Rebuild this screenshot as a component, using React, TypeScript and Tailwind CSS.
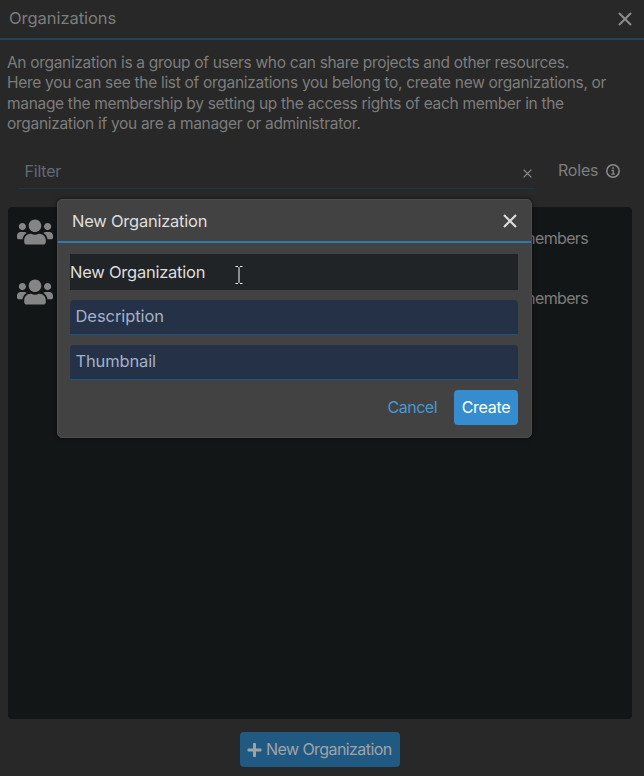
import type { ReactNode } from "react";
import { FaPlus, FaUsers } from "react-icons/fa";

function Cross({ className }: { className: string }) {
  return (
    <svg viewBox="0 0 14 14" className={className} fill="none" stroke="currentColor" strokeWidth="2.1">
      <path d="M1 1 L13 13 M13 1 L1 13" />
    </svg>
  );
}

function InfoIcon() {
  return (
    <svg viewBox="0 0 14 14" className="h-[14px] w-[14px]" fill="none" stroke="#8b8b8b">
      <circle cx="7" cy="7" r="6.2" strokeWidth="1.5" />
      <path d="M5.5 6.3 H7.2 V10 M5.4 10.2 H8.8" strokeWidth="1.3" />
      <path d="M6.2 4 H7.9" strokeWidth="1.6" />
    </svg>
  );
}

function MemberRow() {
  return (
    <li className="flex h-[60.5px] items-start justify-between pr-[44px] pl-[9px]">
      <FaUsers className="mt-[6.5px] h-[36px] w-[36px] text-[#858585]" />
      <span className="mt-[20.5px] text-[16px] leading-[20px] tracking-[-0.65px]">2 members</span>
    </li>
  );
}

function Field({ children }: { children: ReactNode }) {
  return (
    <div className="flex h-[35px] items-center rounded-t-[4px] border-b border-[#1d5580] bg-[#243147] pb-[2px] pl-[5.5px] text-[16.5px] text-[#a3b2c7]">
      {children}
    </div>
  );
}

function Modal() {
  return (
    <section className="absolute top-[199px] left-[57px] h-[239px] w-[475px] rounded-[5px] border border-[#4a4e51] bg-[#424242] text-[#dedede] shadow-[0_0_4px_rgba(0,0,0,0.6)]">
      <header className="flex h-[43px] items-center justify-between border-b-2 border-[#3079ad] pr-[14px] pl-[14px]">
        <h2 className="pt-px text-[16.5px] tracking-[-0.24px]">New Organization</h2>
        <Cross className="h-[14px] w-[14px]" />
      </header>
      <div className="flex flex-col gap-[10px] pt-[11px] pr-[13px] pl-[12px]">
        <div className="flex h-[36px] items-center bg-[#202426] text-[16.5px] tracking-[-0.24px]">New Organization</div>
        <Field><span className="tracking-[-0.07px]">Description</span></Field>
        <Field><span className="tracking-[-0.15px]">Thumbnail</span></Field>
        <div className="flex h-[35px] items-center justify-end gap-[17px]">
          <button className="tracking-[-0.5px] text-[#439bd6]">Cancel</button>
          <button className="h-[35px] w-[64px] rounded-[4px] bg-[#358dd0] tracking-[-0.3px] text-white">Create</button>
        </div>
      </div>
      <svg viewBox="0 0 8 18" className="absolute top-[66px] left-[177px] h-[18px] w-[8px]" fill="none" stroke="#f4f4f4">
        <path d="M0.5 0.5 H3 M5 0.5 H7.5 M4 1 V17 M0.5 17.5 H3 M5 17.5 H7.5" />
      </svg>
    </section>
  );
}

export default function App() {
  return (
    <main className="relative flex h-[776px] w-[644px] flex-col overflow-hidden bg-[#282828] font-['Inter',sans-serif] text-[16px] leading-[20.5px] text-[#7d7d7d]">
      <header className="flex h-[40px] shrink-0 items-center justify-between border-b-2 border-[#24435c] pr-[12px] pb-px pl-[9px]">
        <h1 className="text-[16.5px] tracking-[-0.05px]">Organizations</h1>
        <Cross className="h-[14px] w-[14px] text-[#8b8b8b]" />
      </header>
      <div className="mt-[12.5px] h-[82px] pl-[7px] text-[15.5px] whitespace-nowrap">
        <p className="tracking-[-0.32px]">An organization is a group of users who can share projects and other resources.</p>
        <p className="tracking-[-0.3px]">Here you can see the list of organizations you belong to, create new organizations, or</p>
        <p className="tracking-[-0.31px]">manage the membership by setting up the access rights of each member in the</p>
        <p className="tracking-[-0.3px]">organization if you are a manager or administrator.</p>
      </div>
      <div className="mt-[18.5px] flex h-[54px] items-start pl-[18px]">
        <div className="flex h-[36px] w-[517px] items-center justify-between border-b border-[#1b3747] pr-[3px] pl-[6.5px] text-[#626a75]">
          <span className="pt-px tracking-[-0.2px]">Filter</span>
          <Cross className="mt-[5px] h-[9px] w-[9px] text-[#8b8b8b]" />
        </div>
        <div className="ml-[23px] flex h-[35px] items-center gap-[8px]">
          <span className="tracking-[-0.2px]">Roles</span>
          <InfoIcon />
        </div>
      </div>
      <ul className="mr-[12px] ml-[8px] h-[512px] rounded-[4px] bg-[#131617]">
        <MemberRow />
        <MemberRow />
      </ul>
      <button className="mt-[13px] ml-[240px] flex h-[35px] w-[160px] items-center gap-[4px] rounded-[4px] bg-[#205a83] pl-[7px] whitespace-nowrap text-[#a0a3a6]">
        <FaPlus className="h-[16px] w-[15px] shrink-0" />
        <span className="tracking-[-0.57px]">New Organization</span>
      </button>
      <Modal />
    </main>
  );
}
